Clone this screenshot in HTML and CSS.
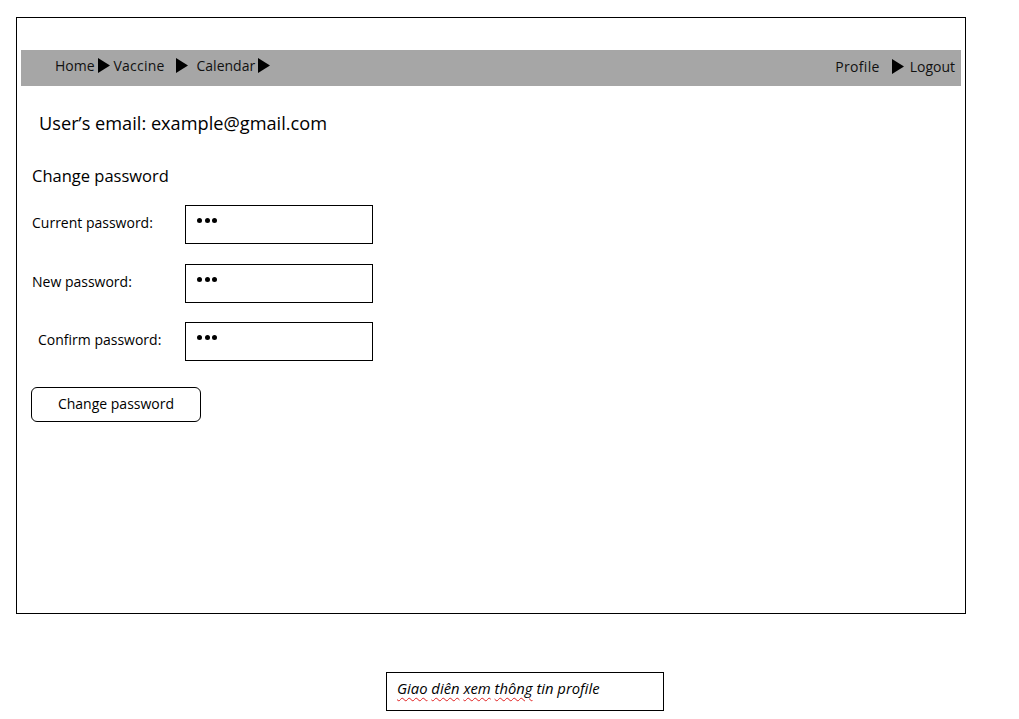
FILE: index.html
```html
<!DOCTYPE html>
<html>
<head>
<meta charset="utf-8">
<link rel="stylesheet" href="styles.css">
</head>
<body>
<div class="frame">
  <nav class="nav">
    <div class="nav-left">
      <span class="link home">Home</span>
      <svg class="tri t1" width="12" height="15" viewBox="0 0 12 15"><polygon points="0,0 12,7.5 0,15" fill="#000"/></svg>
      <span class="link vaccine">Vaccine</span>
      <svg class="tri t2" width="12" height="15" viewBox="0 0 12 15"><polygon points="0,0 12,7.5 0,15" fill="#000"/></svg>
      <span class="link calendar">Calendar</span>
      <svg class="tri t3" width="12" height="15" viewBox="0 0 12 15"><polygon points="0,0 12,7.5 0,15" fill="#000"/></svg>
    </div>
    <div class="nav-right">
      <span class="link profile">Profile</span>
      <svg class="tri t4" width="12" height="15" viewBox="0 0 12 15"><polygon points="0,0 12,7.5 0,15" fill="#000"/></svg>
      <span class="link logout">Logout</span>
    </div>
  </nav>
  <div class="email">User’s email: example@gmail.com</div>
  <div class="section-title">Change password</div>
  <div class="row r1">
    <span class="label">Current password:</span>
    <div class="field"><span class="dots" aria-label="•••"><i></i><i></i><i></i></span></div>
  </div>
  <div class="row r2">
    <span class="label">New password:</span>
    <div class="field"><span class="dots" aria-label="•••"><i></i><i></i><i></i></span></div>
  </div>
  <div class="row r3">
    <span class="label confirm">Confirm password:</span>
    <div class="field"><span class="dots" aria-label="•••"><i></i><i></i><i></i></span></div>
  </div>
  <button class="btn">Change password</button>
</div>
<div class="caption-wrap">
  <div class="caption"><span class="sp">Giao</span> <span class="sp">diên</span> <span class="sp">xem</span> <span class="sp">thông</span> tin profile</div>
</div>
</body>
</html>
```
FILE: styles.css
```css
* { box-sizing: border-box; }
html, body { margin: 0; padding: 0; background: #fff; }
body {
  font-family: "Open Sans", "Noto Sans", sans-serif;
  color: #000;
  width: 1019px;
  height: 719px;
  overflow: hidden;
}
.frame {
  margin: 17px 0 0 16px;
  width: 950px;
  height: 597px;
  border: 1px solid #000;
  padding: 32px 0 0 4px;
}
.nav {
  width: 940px;
  height: 36px;
  background: #a6a6a6;
  display: flex;
  justify-content: space-between;
  font-size: 14px;
  color: #111;
}
.nav-left {
  display: flex;
  align-items: center;
  padding: 0 0 5px 34px;
}
.nav-right {
  display: flex;
  align-items: center;
  padding: 0 6px 3px 0;
}
.tri { display: block; }
.t1 { margin: 0 4px 0 3px; }
.t2 { margin: 0 9px 0 11px; }
.t3 { margin-left: 3px; }
.t4 { margin: 0 6px 0 12px; }
.vaccine { letter-spacing: 0.2px; }
.profile { letter-spacing: 0.3px; }
.email {
  font-size: 18.2px;
  margin: 24px 0 0 18px;
  line-height: 26px;
}
.section-title {
  font-size: 16.5px;
  margin: 29px 0 0 11px;
  line-height: 22px;
}
.row {
  display: flex;
  align-items: center;
  margin-left: 11px;
}
.r1 { margin-top: 18px; }
.r2 { margin-top: 20px; }
.r3 { margin-top: 19px; }
.label {
  font-size: 14px;
  width: 153px;
  padding-bottom: 4px;
}
.label.confirm { padding-left: 6px; }
.field {
  width: 188px;
  height: 39px;
  border: 1px solid #000;
  padding: 12px 0 0 11px;
}
.dots {
  display: flex;
  gap: 2.5px;
}
.dots i {
  display: block;
  width: 5px;
  height: 5px;
  border-radius: 50%;
  background: #000;
}
.btn {
  display: block;
  margin: 26px 0 0 10px;
  width: 170px;
  height: 35px;
  border: 1px solid #000;
  border-radius: 6px;
  background: #fff;
  font-family: "Open Sans", "Noto Sans", sans-serif;
  font-size: 14px;
  color: #000;
  padding: 0 0 2px;
}
.caption-wrap {
  padding: 58px 0 0 386px;
}
.caption {
  width: 278px;
  height: 39px;
  border: 1px solid #000;
  font-style: italic;
  font-size: 14.8px;
  padding: 5px 0 0 10px;
}
.sp {
  text-decoration: underline wavy #e02020;
  text-decoration-thickness: 1px;
  text-underline-offset: 3px;
}
```
